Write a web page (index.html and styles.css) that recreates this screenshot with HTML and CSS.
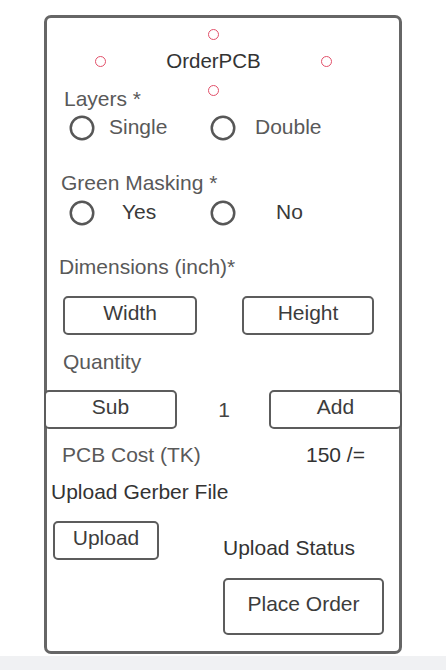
FILE: index.html
```html
<!DOCTYPE html>
<html lang="en">
<head>
<meta charset="utf-8">
<title>OrderPCB</title>
<link rel="stylesheet" href="styles.css">
</head>
<body>
<div class="page">
  <div class="frame">
    <div class="title-block">
      <span class="handle"></span>
      <div class="title-row">
        <span class="handle"></span>
        <span class="title">OrderPCB</span>
        <span class="handle"></span>
      </div>
      <span class="handle handle-bottom"></span>
    </div>

    <div class="label label-layers">Layers *</div>
    <div class="options options-layers">
      <div class="option">
        <svg class="radio" width="26" height="26" viewBox="0 0 26 26"><circle cx="13" cy="13" r="11.25"/></svg>
        <span class="opt-text muted gap-single">Single</span>
      </div>
      <div class="option">
        <svg class="radio" width="26" height="26" viewBox="0 0 26 26"><circle cx="13" cy="13" r="11.25"/></svg>
        <span class="opt-text muted gap-double">Double</span>
      </div>
    </div>

    <div class="label label-mask">Green Masking *</div>
    <div class="options options-mask">
      <div class="option">
        <svg class="radio" width="26" height="26" viewBox="0 0 26 26"><circle cx="13" cy="13" r="11.25"/></svg>
        <span class="opt-text gap-yes">Yes</span>
      </div>
      <div class="option">
        <svg class="radio" width="26" height="26" viewBox="0 0 26 26"><circle cx="13" cy="13" r="11.25"/></svg>
        <span class="opt-text gap-no">No</span>
      </div>
    </div>

    <div class="label label-dim">Dimensions (inch)*</div>
    <div class="dim-row">
      <div class="btn btn-width">Width</div>
      <div class="btn btn-height">Height</div>
    </div>

    <div class="label label-qty">Quantity</div>
    <div class="qty-row">
      <div class="btn btn-qty">Sub</div>
      <div class="qty-count">1</div>
      <div class="btn btn-qty">Add</div>
    </div>

    <div class="cost-row">
      <span class="muted">PCB Cost (TK)</span>
      <span class="dark">150 /=</span>
    </div>

    <div class="label dark label-gerber">Upload Gerber File</div>

    <div class="bottom">
      <div class="btn btn-upload">Upload</div>
      <div class="status dark">Upload Status</div>
      <div class="btn btn-order">Place Order</div>
    </div>
  </div>
  <div class="band"></div>
</div>
</body>
</html>
```

FILE: styles.css
```css
* { box-sizing: border-box; }

html, body {
  margin: 0;
  padding: 0;
  background: #ffffff;
}

body {
  font-family: "Liberation Sans", Arial, sans-serif;
  font-size: 21px;
  line-height: 24px;
  color: #333333;
}

.page {
  width: 446px;
  height: 670px;
  display: flex;
  flex-direction: column;
  overflow: hidden;
}

.frame {
  margin: 15px 0 0 44px;
  width: 358px;
  height: 639px;
  border: 3px solid #666666;
  border-radius: 7px;
  display: flex;
  flex-direction: column;
  align-items: flex-start;
}

.band {
  margin-top: 2px;
  flex: 1;
  background: #f0f1f3;
}

/* title with anchor handles */
.title-block {
  margin: 11px 0 0 48px;
  width: 237px;
  display: flex;
  flex-direction: column;
  align-items: center;
}

.title-row {
  margin-top: 9px;
  width: 100%;
  height: 24px;
  display: flex;
  justify-content: space-between;
  align-items: center;
}

.handle {
  display: block;
  width: 11px;
  height: 11px;
  border: 1px solid #e2506a;
  border-radius: 50%;
  flex: none;
}

.handle-bottom { margin-top: 12px; }

.title {
  color: #333333;
  font-size: 20.5px;
}

/* labels */
.label {
  color: #595959;
  white-space: nowrap;
}

.muted { color: #595959; }
.dark { color: #333333; }

.label-layers { margin: -9px 0 0 17px; }
.label-mask { margin: 30px 0 0 14px; }
.label-dim { margin: 29px 0 0 12px; }
.label-qty { margin: 15px 0 0 16px; }
.label-gerber { margin: 13px 0 0 4px; }

/* radio options */
.options {
  margin-left: 22px;
  display: grid;
  grid-template-columns: 141px 141px;
}

.options-layers { margin-top: 4px; }
.options-mask { margin-top: 5px; }

.option {
  display: flex;
  align-items: flex-start;
}

.radio {
  flex: none;
  display: block;
}

.radio circle {
  fill: none;
  stroke: #575757;
  stroke-width: 2.5;
}

.opt-text { white-space: nowrap; }
.gap-single { margin-left: 14px; }
.gap-double { margin-left: 19px; }
.gap-yes { margin-left: 27px; color: #3a3a3a; }
.gap-no { margin-left: 40px; color: #3a3a3a; }

/* buttons */
.btn {
  border: 2px solid #5c5c5c;
  border-radius: 5px;
  height: 39px;
  padding-top: 3px;
  text-align: center;
  color: #3c3c3c;
  white-space: nowrap;
  background: #ffffff;
}

.dim-row {
  margin: 17px 0 0 16px;
  display: flex;
  gap: 45px;
}

.btn-width { width: 134px; }
.btn-height { width: 132px; }

.qty-row {
  margin: 16px 0 0 -3px;
  width: 358px;
  display: flex;
  align-items: center;
}

.btn-qty { width: 133px; flex: none; }

.qty-count {
  flex: 1;
  text-align: center;
  padding-left: 2px;
  color: #444444;
}

.cost-row {
  margin: 14px 0 0 15px;
  display: grid;
  grid-template-columns: 244px auto;
  white-space: nowrap;
}

/* bottom area */
.bottom {
  margin-top: 17px;
  display: grid;
  grid-template-columns: 176px 161px;
}

.btn-upload {
  width: 106px;
  margin-left: 6px;
}

.status {
  margin-top: 15px;
  white-space: nowrap;
}

.btn-order {
  grid-column: 2;
  margin-top: 18px;
  height: 57px;
  padding-top: 12px;
}
```
